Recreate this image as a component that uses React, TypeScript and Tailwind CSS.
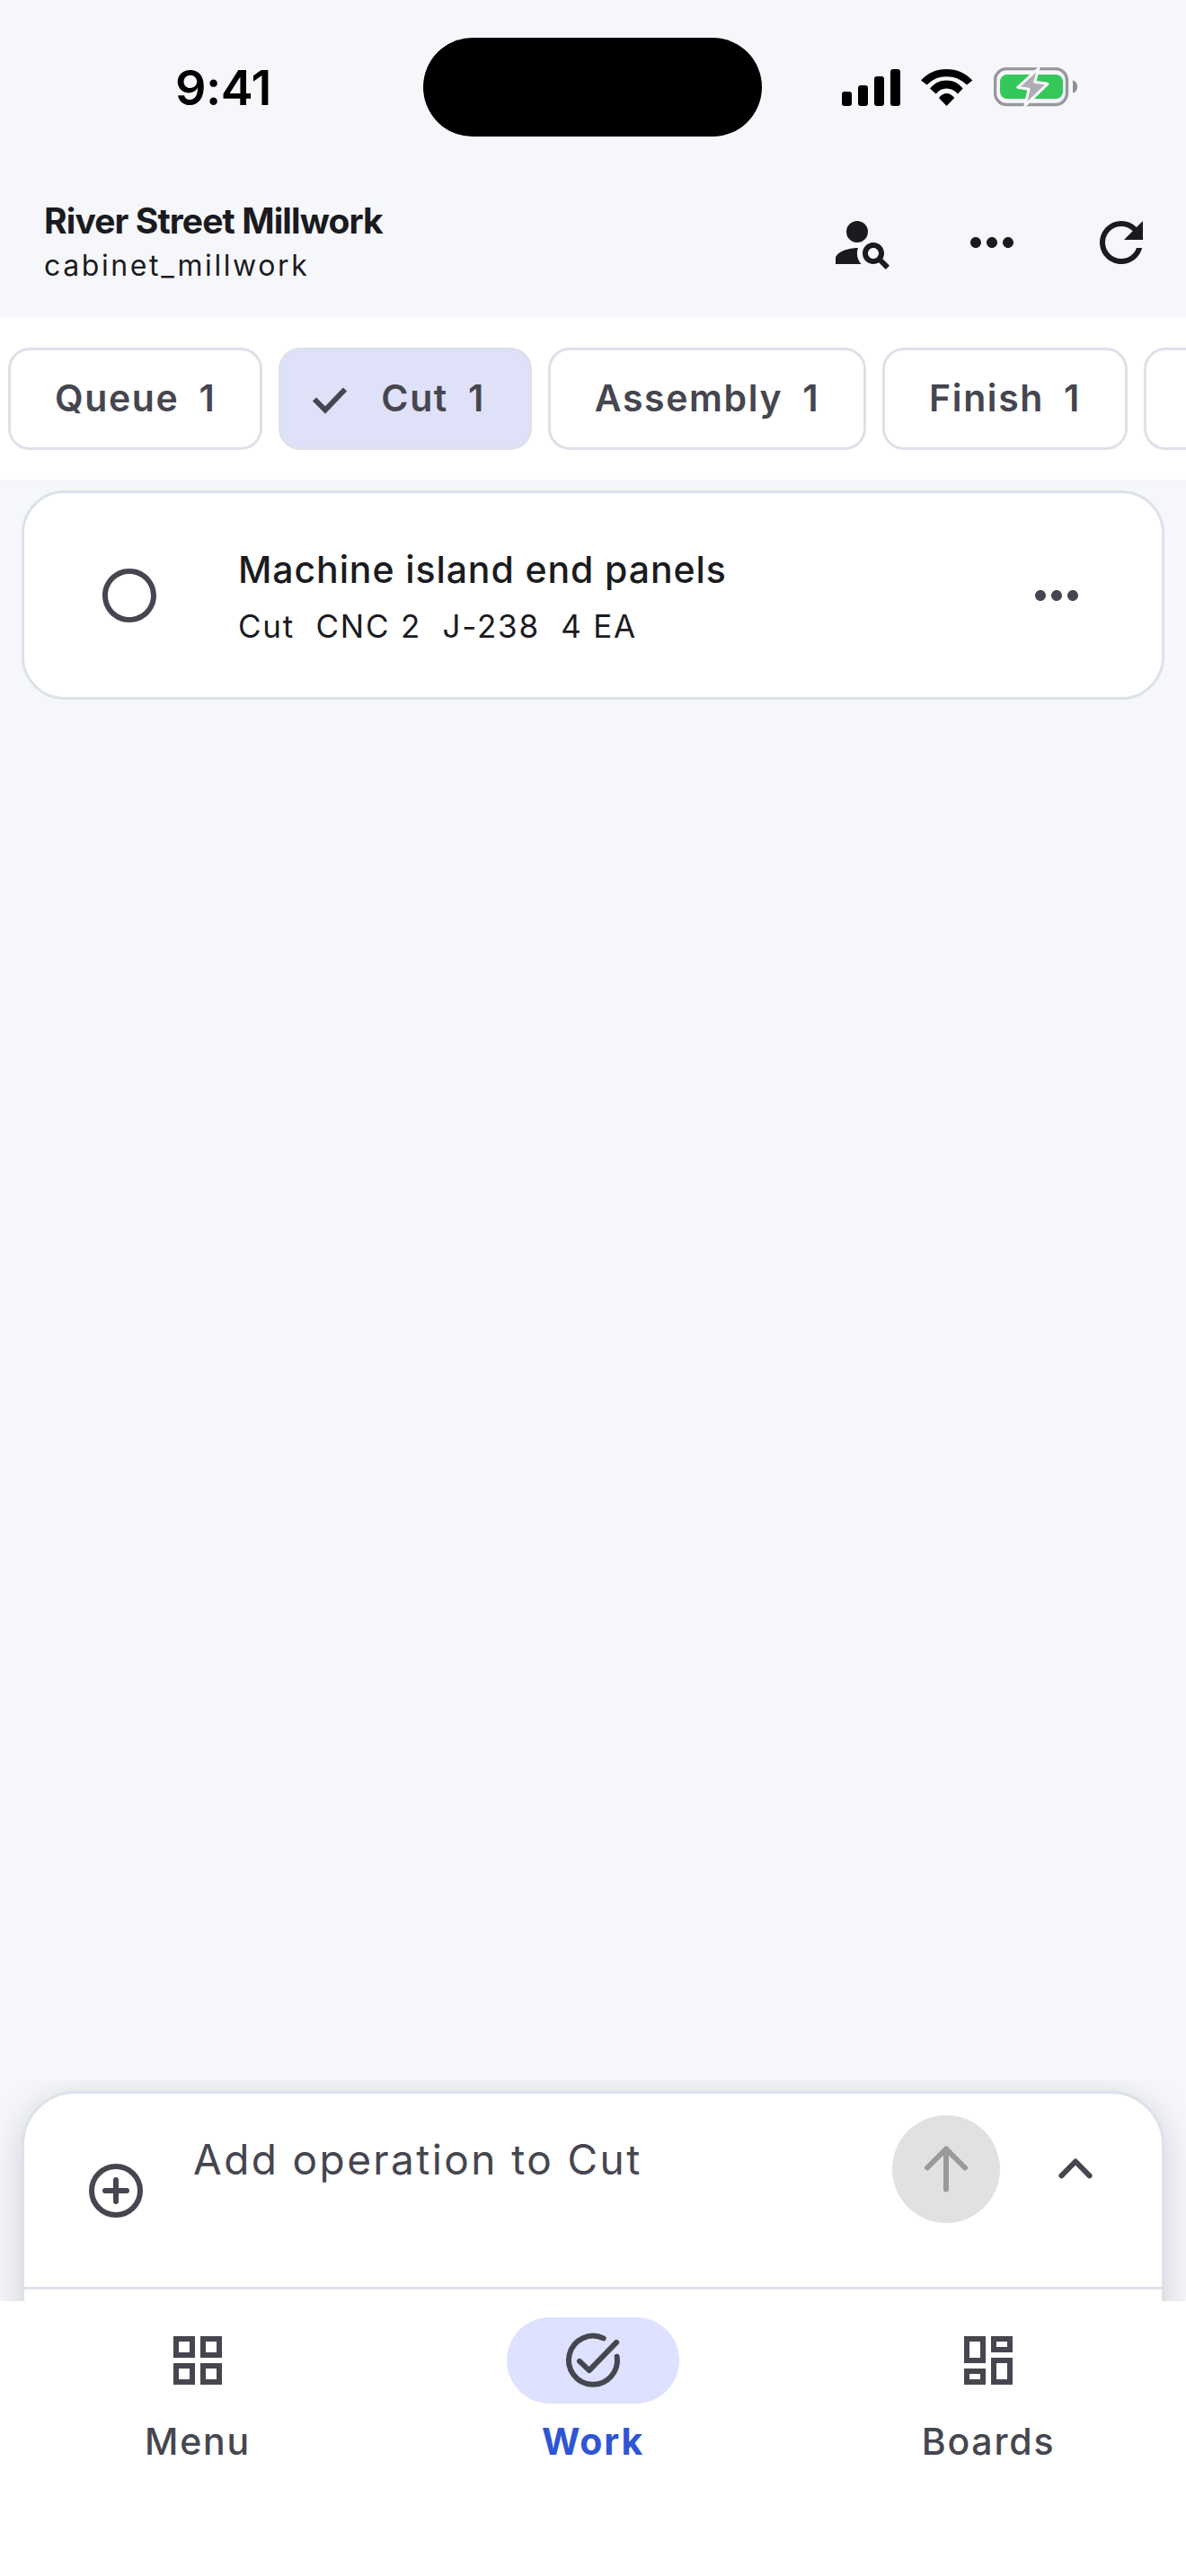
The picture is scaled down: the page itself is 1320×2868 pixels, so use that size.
import { MdPersonSearch, MdMoreHoriz, MdRefresh, MdRadioButtonUnchecked, MdOutlineGridView, MdOutlineDashboard } from "react-icons/md"

const tabs = [
    { label: "Queue", count: 1 },
    { label: "Cut", count: 1, active: true },
    { label: "Assembly", count: 1 },
    { label: "Finish", count: 1 },
]

const StatusIcons = () => (
    <div className="flex items-center pl-[89px]">
        <svg width="65" height="41" viewBox="0 0 65 41" className="fill-black">
            <rect x="0" y="25" width="11" height="16" rx="3" />
            <rect x="18" y="18" width="11" height="23" rx="3" />
            <rect x="36" y="8" width="11" height="33" rx="3" />
            <rect x="54" y="0" width="11" height="41" rx="3" />
        </svg>
        <svg width="58" height="41" viewBox="0 0 58 41" className="ml-[23px] fill-black">
            <path d="M0 12.6C7 4.5 17 0 28.5 0S50 4.500 57.300 12.600L51 17.600C45 11.500 37 8.300 28.500 8.300S12.500 11.500 6.700 17.600Z" />
            <path d="M10 21.600C15 15.800 21 12.600 28.500 12.600S42 15.800 46.700 21.600L41 27.600C37.500 23.700 33.500 21.600 28.500 21.600S19.700 23.700 16.700 27.600Z" />
            <path d="M20 32C22 29 25 27 28.500 27S35 29 37.300 32L28.500 41Z" />
        </svg>
        <svg width="94" height="44" viewBox="0 0 94 44" className="ml-[23px]">
            <rect x="1.500" y="1.500" width="80" height="40" rx="13" fill="none" stroke="#98989d" strokeWidth="3.500" />
            <rect x="7" y="8" width="70" height="27" rx="8" fill="#34c759" />
            <path d="M88 14.500C91 15 93 17.500 93 21.500S91 28 88 28.500Z" fill="#8e8e93" />
            <path d="M50 1L26.700 22.300L39 24.300L35 42.300L60 18.300L45.700 16.300Z" fill="#aeaeb2" stroke="#f6f7fb" strokeWidth="3" strokeLinejoin="round" />
        </svg>
    </div>
)

const Tab = ({ label, count, active }: { label: string; count: number; active?: boolean }) => (
    <div className={`flex h-[114px] shrink-0 items-center rounded-[24px] border-3 border-[#dde1ea] px-[49px] text-[41px] font-semibold tracking-[1.6px] text-[#45464f] ${active ? "bg-[#dfe1f9]" : "bg-white"}`}>
        {active && (
            <svg width="54" height="54" viewBox="0 0 54 54" className="mr-[29px] -ml-[21px] shrink-0 fill-none stroke-[#45464f] stroke-[6px]">
                <path d="M9 27.500L21 39.500L43 16.500" />
            </svg>
        )}
        <span>{label}</span>
        <span className="ml-[22px]">{count}</span>
    </div>
)

const NavItem = ({ label, active, children }: { label: string; active?: boolean; children: React.ReactNode }) => (
    <div className="flex flex-col items-center pt-[18px]">
        <div className={`flex h-[96px] w-[192px] items-center justify-center rounded-full text-[#45464f] ${active ? "bg-[#dee1ff]" : ""}`}>
            {children}
        </div>
        <span className={`mt-[17px] text-[41px] leading-[50px] tracking-[1.8px] ${active ? "font-bold text-[#2f55d4]" : "font-medium text-[#45464f]"}`}>{label}</span>
    </div>
)

export default function App() {
    return (
        <div className="flex h-[2868px] w-[1320px] flex-col overflow-hidden bg-[#f6f7fb] font-['Inter',sans-serif]">
            <div className="flex h-[152px] items-end">
                <div className="flex h-[110px] w-[471px] items-center justify-center pl-[26px] text-[54px] font-semibold tracking-[-0.5px] text-black">9:41</div>
                <div className="h-[110px] w-[377px] rounded-full bg-black" />
                <div className="flex h-[110px] items-center">
                    <StatusIcons />
                </div>
            </div>

            <div className="flex h-[201px] items-center pt-[35px]">
                <div className="flex-1 pl-[49px] text-[#1a1b20]">
                    <div className="-mt-[2px] text-[39px] leading-[50px] font-bold tracking-[-0.9px]">River Street Millwork</div>
                    <div className="mt-[3px] text-[32px] leading-[44px] tracking-[2.6px]">cabinet_millwork</div>
                </div>
                <div className="flex text-[72px] text-[#1a1b20]">
                    <div className="flex w-[144px] justify-center"><MdPersonSearch /></div>
                    <div className="flex w-[144px] justify-center"><MdMoreHoriz /></div>
                    <div className="flex w-[144px] justify-center"><MdRefresh /></div>
                </div>
            </div>

            <div className="flex h-[181px] items-center gap-[18px] overflow-hidden bg-white pl-[9px]">
                {tabs.map((t) => <Tab key={t.label} label={t.label} count={t.count} active={t.active} />)}
                <div className="h-[114px] w-[100px] shrink-0 rounded-[24px] border-3 border-[#dde1ea] bg-white" />
            </div>

            <div className="flex-1 px-[24px] pt-[12px]">
                <div className="flex h-[233px] items-center rounded-[48px] border-3 border-[#dde1ea] bg-white px-[81px]">
                    <MdRadioButtonUnchecked className="shrink-0 text-[72px] text-[#45464f]" />
                    <div className="ml-[85px] flex-1">
                        <div className="text-[41px] leading-[54px] font-medium tracking-[0.9px] text-[#1a1b20]">Machine island end panels</div>
                        <div className="mt-[14px] text-[35px] leading-[44px] tracking-[1.8px] whitespace-pre text-[#1a1b20]">{"Cut  CNC 2  J-238  4 EA"}</div>
                    </div>
                    <MdMoreHoriz className="shrink-0 text-[72px] text-[#45464f]" />
                </div>
            </div>

            <div className="h-[246px] overflow-hidden px-[24px] pt-[12px]">
                <div className="h-[300px] rounded-t-[60px] border-3 border-[#dde1ea] bg-white shadow-[0_8px_40px_rgba(0,0,0,0.16)]">
                    <div className="flex h-[218px] items-start border-b-3 border-[#dde1ea] pr-[60px] pl-[66px]">
                        <svg width="72" height="72" viewBox="0 0 24 24" className="mt-[72px] shrink-0 fill-none stroke-[#45464f] stroke-2" strokeLinecap="round">
                            <circle cx="12" cy="12" r="9" />
                            <path d="M12 8v8M8 12h8" />
                        </svg>
                        <div className="mt-[45px] ml-[50px] flex-1 text-[46px] leading-[56px] tracking-[2.4px] text-[#45464f]">Add operation to Cut</div>
                        <div className="mt-[24px] flex h-[120px] w-[120px] shrink-0 items-center justify-center rounded-full bg-[#e1e1e1]">
                            <svg width="72" height="72" viewBox="0 0 24 24" className="fill-none stroke-[#9a9a9a] stroke-2" strokeLinecap="round" strokeLinejoin="round">
                                <path d="M12 19.500V4.500M5 11.500l7-7 7 7" />
                            </svg>
                        </div>
                        <svg width="72" height="72" viewBox="0 0 24 24" className="mt-[47px] ml-[48px] shrink-0 fill-none stroke-[#45464f] stroke-2" strokeLinecap="round" strokeLinejoin="round">
                            <path d="M6.800 14.800L12 9.500l5.200 5.300" />
                        </svg>
                    </div>
                </div>
            </div>

            <div className="grid h-[306px] grid-cols-3 bg-white">
                <NavItem label="Menu"><MdOutlineGridView className="text-[72px]" /></NavItem>
                <NavItem label="Work" active>
                    <svg width="72" height="72" viewBox="0 0 24 24" className="fill-none stroke-[#45464f] stroke-2" strokeLinecap="round" strokeLinejoin="round">
                        <path d="M15.900 3.800A9 9 0 1 0 20.900 10.600" />
                        <path d="M7 12.300l3.600 3.400 10.100-10.400" />
                    </svg>
                </NavItem>
                <NavItem label="Boards"><MdOutlineDashboard className="text-[72px]" /></NavItem>
            </div>
        </div>
    )
}
